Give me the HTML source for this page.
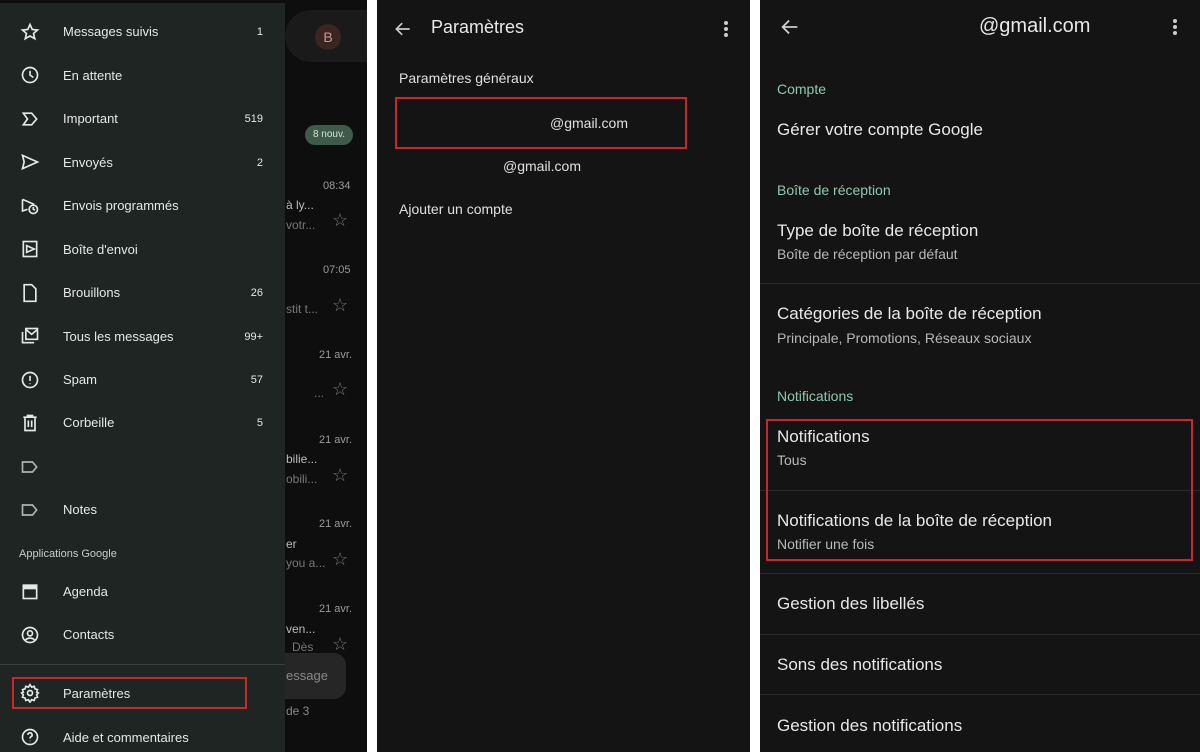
<!DOCTYPE html>
<html><head><meta charset="utf-8"><style>
*{margin:0;padding:0;box-sizing:border-box}
body{width:1200px;height:752px;background:#fff;position:relative;overflow:hidden;font-family:"Liberation Sans",sans-serif}
.p{position:absolute;top:0;height:752px;overflow:hidden}
.t{position:absolute;white-space:nowrap}
.dr .t{font-size:13px;color:#e6e8e6}
.cnt{position:absolute;right:22px;font-size:11px;color:#e6e8e6}
svg.i{position:absolute;left:20px;width:20px;height:20px}
.g{color:#c9ccc9}
.h{color:#8ecaae;font-size:14px}
.m{color:#e8e8e8;font-size:17px}
.s{color:#b9b9b9;font-size:14px}
.ln{position:absolute;left:0;right:0;height:1px;background:#2a2a2a}
</style></head><body>
<!-- panel 1 -->
<div class="p" style="left:0;width:367px;background:#0e0e0e">
 <div style="position:absolute;left:285px;top:10px;width:82px;height:52px;background:#1a1a1a;border-radius:26px 0 0 26px"></div>
 <div style="position:absolute;left:315px;top:24px;width:26px;height:26px;border-radius:50%;background:#3a2523;color:#c89890;font-size:14px;text-align:center;line-height:26px">B</div>
 <div style="position:absolute;left:305px;top:125px;width:48px;height:20px;border-radius:10px;background:#3f5a48;color:#cfe3d4;font-size:10px;text-align:center;line-height:20px">8 nouv.</div>
 <div class="t" style="left:323px;top:180px;font-size:11px;color:#9a9a9a">08:34</div>
 <div class="t" style="left:286px;top:198px;font-size:12px;color:#bbb">à ly...</div>
 <div class="t" style="left:286px;top:218px;font-size:12px;color:#777">votr...</div>
 <div class="t" style="left:332px;top:210px;font-size:18px;color:#777">☆</div>
 <div class="t" style="left:323px;top:264px;font-size:11px;color:#9a9a9a">07:05</div>
 <div class="t" style="left:286px;top:302px;font-size:12px;color:#777">stit t...</div>
 <div class="t" style="left:332px;top:295px;font-size:18px;color:#777">☆</div>
 <div class="t" style="left:319px;top:349px;font-size:11px;color:#9a9a9a">21 avr.</div>
 <div class="t" style="left:314px;top:386px;font-size:12px;color:#777">...</div>
 <div class="t" style="left:332px;top:379px;font-size:18px;color:#777">☆</div>
 <div class="t" style="left:319px;top:434px;font-size:11px;color:#9a9a9a">21 avr.</div>
 <div class="t" style="left:286px;top:452px;font-size:12px;color:#bbb">bilie...</div>
 <div class="t" style="left:286px;top:472px;font-size:12px;color:#777">obili...</div>
 <div class="t" style="left:332px;top:465px;font-size:18px;color:#777">☆</div>
 <div class="t" style="left:319px;top:518px;font-size:11px;color:#9a9a9a">21 avr.</div>
 <div class="t" style="left:286px;top:537px;font-size:12px;color:#bbb">er</div>
 <div class="t" style="left:286px;top:556px;font-size:12px;color:#777">you a...</div>
 <div class="t" style="left:332px;top:549px;font-size:18px;color:#777">☆</div>
 <div class="t" style="left:319px;top:603px;font-size:11px;color:#9a9a9a">21 avr.</div>
 <div class="t" style="left:286px;top:622px;font-size:12px;color:#bbb">ven...</div>
 <div class="t" style="left:292px;top:640px;font-size:12px;color:#777">Dès</div>
 <div class="t" style="left:332px;top:634px;font-size:18px;color:#777">☆</div>
 <div style="position:absolute;left:260px;top:653px;width:86px;height:46px;border-radius:12px;background:#262626"></div>
 <div class="t" style="left:286px;top:668px;font-size:13px;color:#888">essage</div>
 <div class="t" style="left:286px;top:704px;font-size:12px;color:#888">de 3</div>
 <div class="dr" style="position:absolute;left:0;top:3px;width:285px;height:749px;background:#1e2522">
  <svg class="i" style="top:19px" viewBox="0 0 24 24" fill="none" stroke="#e6e8e6" stroke-width="2"><path d="M12 3l2.7 6 6.3.6-4.8 4.2 1.5 6.2L12 16.8 6.3 20l1.5-6.2L3 9.6l6.3-.6z"/></svg>
  <div class="t" style="left:63px;top:21px">Messages suivis</div><div class="cnt" style="top:23px">1</div>
  <svg class="i" style="top:62px" viewBox="0 0 24 24" fill="none" stroke="#e6e8e6" stroke-width="2"><circle cx="12" cy="12" r="9"/><path d="M12 7v5l4 3"/></svg>
  <div class="t" style="left:63px;top:65px">En attente</div>
  <svg class="i" style="top:106px" viewBox="0 0 24 24" fill="none" stroke="#e6e8e6" stroke-width="2"><path d="M4 5h10l6 7-6 7H4l5-7z"/></svg>
  <div class="t" style="left:63px;top:108px">Important</div><div class="cnt" style="top:110px">519</div>
  <svg class="i" style="top:149px" viewBox="0 0 24 24" fill="none" stroke="#e6e8e6" stroke-width="2"><path d="M3 4l18 8-18 8 2-8z"/></svg>
  <div class="t" style="left:63px;top:152px">Envoyés</div><div class="cnt" style="top:154px">2</div>
  <svg class="i" style="top:193px" viewBox="0 0 24 24" fill="none" stroke="#e6e8e6" stroke-width="2"><path d="M3 4l14 6M3 4v14l6-2"/><circle cx="16" cy="16" r="5"/><path d="M16 13v3l2 1"/></svg>
  <div class="t" style="left:63px;top:195px">Envois programmés</div>
  <svg class="i" style="top:236px" viewBox="0 0 24 24" fill="none" stroke="#e6e8e6" stroke-width="2"><rect x="4" y="3" width="16" height="18"/><path d="M8 8l9 4-9 4z"/></svg>
  <div class="t" style="left:63px;top:239px">Boîte d'envoi</div>
  <svg class="i" style="top:280px" viewBox="0 0 24 24" fill="none" stroke="#e6e8e6" stroke-width="2"><path d="M5 2h9l5 5v15H5z"/></svg>
  <div class="t" style="left:63px;top:282px">Brouillons</div><div class="cnt" style="top:284px">26</div>
  <svg class="i" style="top:323px" viewBox="0 0 24 24" fill="none" stroke="#e6e8e6" stroke-width="2"><path d="M3 7v13h14"/><rect x="7" y="3" width="14" height="13"/><path d="M7 4l7 6 7-6"/></svg>
  <div class="t" style="left:63px;top:326px">Tous les messages</div><div class="cnt" style="top:328px">99+</div>
  <svg class="i" style="top:367px" viewBox="0 0 24 24" fill="none" stroke="#e6e8e6" stroke-width="2"><circle cx="12" cy="12" r="9"/><path d="M12 7v6M12 16v1"/></svg>
  <div class="t" style="left:63px;top:369px">Spam</div><div class="cnt" style="top:371px">57</div>
  <svg class="i" style="top:410px" viewBox="0 0 24 24" fill="none" stroke="#e6e8e6" stroke-width="2"><path d="M4 5h16M9 5V3h6v2M6 5v16h12V5M10 9v8M14 9v8"/></svg>
  <div class="t" style="left:63px;top:412px">Corbeille</div><div class="cnt" style="top:414px">5</div>
  <svg class="i" style="top:454px" viewBox="0 0 24 24" fill="none" stroke="#b0b4b0" stroke-width="2"><path d="M3 6h12l5 6-5 6H3z"/></svg>
  <svg class="i" style="top:497px" viewBox="0 0 24 24" fill="none" stroke="#b0b4b0" stroke-width="2"><path d="M3 6h12l5 6-5 6H3z"/></svg>
  <div class="t" style="left:63px;top:499px">Notes</div>
  <div class="t" style="left:19px;top:545px;font-size:11px;color:#c9ccc9">Applications Google</div>
  <svg class="i" style="top:578px" viewBox="0 0 24 24" fill="none" stroke="#e6e8e6" stroke-width="2"><rect x="4" y="5" width="16" height="16"/><path d="M4 8h16" stroke-width="4"/></svg>
  <div class="t" style="left:63px;top:581px">Agenda</div>
  <svg class="i" style="top:622px" viewBox="0 0 24 24" fill="none" stroke="#e6e8e6" stroke-width="2"><circle cx="12" cy="12" r="9"/><circle cx="12" cy="10" r="3"/><path d="M6.5 18c3-3 8-3 11 0"/></svg>
  <div class="t" style="left:63px;top:624px">Contacts</div>
  <div style="position:absolute;left:0;top:661px;width:285px;height:1px;background:#3a403d"></div>
  <div style="position:absolute;left:12px;top:674px;width:235px;height:32px;border:2px solid #c8282a"></div>
  <svg class="i" style="top:680px" viewBox="0 0 24 24" fill="none" stroke="#e6e8e6" stroke-width="2"><circle cx="12" cy="12" r="3"/><path d="M12 2l2 3 3-1 1 3 3 1-1 3 2 1-2 2 1 3-3 1-1 3-3-1-2 3-2-3-3 1-1-3-3-1 1-3-2-2 2-1-1-3 3-1 1-3 3 1z"/></svg>
  <div class="t" style="left:63px;top:683px">Paramètres</div>
  <svg class="i" style="top:724px" viewBox="0 0 24 24" fill="none" stroke="#e6e8e6" stroke-width="2"><circle cx="12" cy="12" r="9"/><path d="M9.5 9.5a2.5 2.5 0 1 1 3.5 2.3c-.8.4-1 1-1 2M12 16.5v.5"/></svg>
  <div class="t" style="left:63px;top:727px">Aide et commentaires</div>
 </div>
</div>
<!-- panel 2 -->
<div class="p" style="left:377px;width:373px;background:#141414">
 <svg style="position:absolute;left:16px;top:19px;width:20px;height:20px" viewBox="0 0 24 24" fill="none" stroke="#ccc" stroke-width="2"><path d="M20 12H5M11 5l-7 7 7 7"/></svg>
 <div class="t" style="left:54px;top:17px;font-size:18px;color:#e8e8e8">Paramètres</div>
 <div style="position:absolute;left:347px;top:21px;width:4px;height:4px;border-radius:2px;background:#ccc;box-shadow:0 6px #ccc,0 12px #ccc"></div>
 <div class="t" style="left:22px;top:70px;font-size:14px;color:#e0e0e0">Paramètres généraux</div>
 <div style="position:absolute;left:18px;top:97px;width:292px;height:52px;border:2px solid #c8282a"></div>
 <div class="t" style="left:173px;top:115px;font-size:14px;color:#e0e0e0">@gmail.com</div>
 <div class="t" style="left:126px;top:158px;font-size:14px;color:#e0e0e0">@gmail.com</div>
 <div class="t" style="left:22px;top:201px;font-size:14px;color:#e0e0e0">Ajouter un compte</div>
</div>
<!-- panel 3 -->
<div class="p" style="left:760px;width:440px;background:#141414">
 <svg style="position:absolute;left:19px;top:16px;width:22px;height:22px" viewBox="0 0 24 24" fill="none" stroke="#ccc" stroke-width="2"><path d="M20 12H5M11 5l-7 7 7 7"/></svg>
 <div class="t" style="left:219px;top:15px;font-size:20px;color:#e8e8e8">@gmail.com</div>
 <div style="position:absolute;left:413px;top:19px;width:4px;height:4px;border-radius:2px;background:#ccc;box-shadow:0 6px #ccc,0 12px #ccc"></div>
 <div class="t h" style="left:17px;top:81px">Compte</div>
 <div class="t m" style="left:17px;top:120px">Gérer votre compte Google</div>
 <div class="t h" style="left:17px;top:182px">Boîte de réception</div>
 <div class="t m" style="left:17px;top:221px">Type de boîte de réception</div>
 <div class="t s" style="left:17px;top:246px">Boîte de réception par défaut</div>
 <div class="ln" style="top:283px"></div>
 <div class="t m" style="left:17px;top:304px">Catégories de la boîte de réception</div>
 <div class="t s" style="left:17px;top:330px">Principale, Promotions, Réseaux sociaux</div>
 <div class="t h" style="left:17px;top:388px">Notifications</div>
 <div class="t m" style="left:17px;top:427px">Notifications</div>
 <div class="t s" style="left:17px;top:452px">Tous</div>
 <div class="ln" style="top:490px"></div>
 <div class="t m" style="left:17px;top:511px">Notifications de la boîte de réception</div>
 <div class="t s" style="left:17px;top:536px">Notifier une fois</div>
 <div style="position:absolute;left:6px;top:419px;width:427px;height:142px;border:2px solid #c8282a"></div>
 <div class="ln" style="top:573px"></div>
 <div class="t m" style="left:17px;top:594px">Gestion des libellés</div>
 <div class="ln" style="top:634px"></div>
 <div class="t m" style="left:17px;top:655px">Sons des notifications</div>
 <div class="ln" style="top:694px"></div>
 <div class="t m" style="left:17px;top:716px">Gestion des notifications</div>
</div>
</body></html>
